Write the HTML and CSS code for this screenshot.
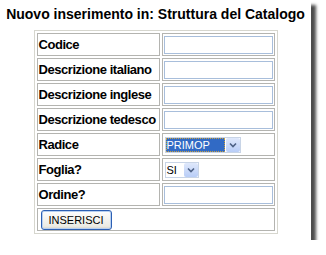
FILE: index.html
```html
<!DOCTYPE html>
<html lang="it">
  <head>
    <meta charset="utf-8" />
    <title>Nuovo inserimento</title>
    <link rel="stylesheet" href="styles.css">
  </head>
  <body>
    <div class="frame">
      <h1 class="title">Nuovo inserimento in: Struttura del Catalogo</h1>

      <!-- Form inserimento -->
      <table class="form-table">
        <tr>
          <td class="label">Codice</td>
          <td class="field"><input type="text" class="text-input" /></td>
        </tr>
        <tr>
          <td class="label">Descrizione italiano</td>
          <td class="field"><input type="text" class="text-input" /></td>
        </tr>
        <tr>
          <td class="label">Descrizione inglese</td>
          <td class="field"><input type="text" class="text-input" /></td>
        </tr>
        <tr>
          <td class="label">Descrizione tedesco</td>
          <td class="field"><input type="text" class="text-input" /></td>
        </tr>
        <tr>
          <td class="label">Radice</td>
          <td class="field">
            <div class="select select-wide">
              <span class="select-value selected">PRIMOP</span>
              <span class="select-arrow">
                <svg viewBox="0 0 8 6" width="8" height="6"><path d="M1 1.5 L4 4.5 L7 1.5" fill="none" stroke="#4d6185" stroke-width="1.6"/></svg>
              </span>
            </div>
          </td>
        </tr>
        <tr>
          <td class="label">Foglia?</td>
          <td class="field">
            <div class="select select-small">
              <span class="select-value">SI</span>
              <span class="select-arrow">
                <svg viewBox="0 0 8 6" width="8" height="6"><path d="M1 1.5 L4 4.5 L7 1.5" fill="none" stroke="#4d6185" stroke-width="1.6"/></svg>
              </span>
            </div>
          </td>
        </tr>
        <tr>
          <td class="label">Ordine?</td>
          <td class="field"><input type="text" class="text-input" /></td>
        </tr>
        <tr>
          <td class="field" colspan="2"><button class="btn">INSERISCI</button></td>
        </tr>
      </table>
    </div>
  </body>
</html>
```

FILE: styles.css
```css
body {
  margin: 0;
  background: #fff;
  font-family: 'Liberation Sans', Arial, sans-serif;
}

/* Riquadro con ombra */
.frame {
  width: 311px;
  height: 240px;
  background: #fff;
  box-shadow: 5px 5px 3px rgba(0, 0, 0, 0.7);
  overflow: hidden;
}

.title {
  margin: 0;
  padding: 6px 0 8px;
  font-size: 14px;
  font-weight: bold;
  color: #000;
  text-align: center;
}

.form-table {
  margin: 0 auto;
  border: 1px solid #d6d6ce;
  border-spacing: 2px;
}

.form-table td {
  border: 1px solid #b4b4b0;
  height: 21px;
  padding: 0 1px;
  vertical-align: middle;
}

.label {
  width: 119px;
  font-size: 13px;
  letter-spacing: -0.45px;
  font-weight: bold;
  color: #000;
  white-space: nowrap;
}

.field {
  width: 108px;
}

.text-input {
  display: block;
  box-sizing: border-box;
  width: 109px;
  height: 18px;
  margin: 0;
  border: 1px solid #a8bedb;
  background: #fff;
}

.select {
  display: flex;
  align-items: center;
  box-sizing: border-box;
  height: 16px;
  margin-left: 1px;
  border: 1px solid #c8d4e6;
  background: #fff;
}

.select-wide { width: 76px; }
.select-small { width: 34px; }

.select-value {
  flex: 1;
  height: 14px;
  font-size: 11px;
  line-height: 14px;
  padding-left: 1px;
  color: #000;
}

.select-value.selected {
  background: #316ac5;
  color: #fff;
  outline: 1px dotted #c9a040;
  outline-offset: -1px;
}

.select-arrow {
  display: flex;
  align-items: center;
  justify-content: center;
  width: 14px;
  height: 14px;
  margin-left: 1px;
  background: linear-gradient(#dfe8fb, #b8cdf7);
  border-radius: 2px;
}

.btn {
  display: block;
  box-sizing: border-box;
  width: 71px;
  height: 20px;
  margin: 0 0 0 2px;
  padding: 0;
  border: 1px solid #2c5fb3;
  border-radius: 3px;
  background: linear-gradient(#fefefe, #ebebe4 85%, #d6d0c5);
  font-family: 'Liberation Sans', Arial, sans-serif;
  font-size: 11px;
  color: #000;
  box-shadow: inset 0 0 0 1px #b8d0f0;
}
```
